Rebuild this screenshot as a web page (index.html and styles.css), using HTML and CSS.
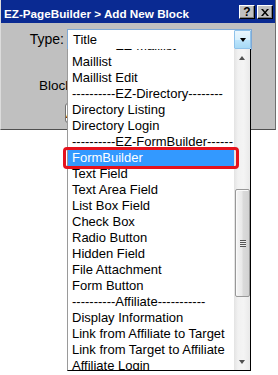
FILE: index.html
```html
<!DOCTYPE html>
<html>
<head>
<title>EZ-PageBuilder - Add New Block</title>
<link rel="stylesheet" href="styles.css">
</head>
<body>

<div class="window">
    <div class="titlebar">
        <span class="title">EZ-PageBuilder &gt; Add New Block</span>
        <div class="tb-buttons">
            <span class="tb-btn help">?</span>
            <span class="tb-btn close">
                <svg width="8" height="7" viewBox="0 0 8 7"><path d="M0 0h2l2 2.5L6 0h2L5 3.5 8 7H6L4 4.5 2 7H0l3-3.5z" fill="#000"/></svg>
            </span>
        </div>
    </div>

    <div class="form">
        <div class="row">
            <label class="lbl">Type:</label>
            <div class="select">
                <span class="sel-text">Title</span>
                <span class="sel-btn"><span class="arrow-down"></span></span>
            </div>
        </div>
        <div class="row row-name">
            <label class="lbl-name">Block Name:</label>
        </div>
        <div class="row row-btn">
            <span class="btn">Add Block</span>
        </div>
    </div>
</div>

<div class="dropdown">
    <ul class="options">
        <li class="first">----------EZ-Maillist----------</li>
        <li>Maillist</li>
        <li>Maillist Edit</li>
        <li>----------EZ-Directory--------</li>
        <li>Directory Listing</li>
        <li>Directory Login</li>
        <li>----------EZ-FormBuilder------</li>
        <li class="selected">FormBuilder</li>
        <li>Text Field</li>
        <li>Text Area Field</li>
        <li>List Box Field</li>
        <li>Check Box</li>
        <li>Radio Button</li>
        <li>Hidden Field</li>
        <li>File Attachment</li>
        <li>Form Button</li>
        <li>----------Affiliate-----------</li>
        <li>Display Information</li>
        <li>Link from Affiliate to Target</li>
        <li>Link from Target to Affiliate</li>
        <li>Affiliate Login</li>
    </ul>
    <div class="scrollbar">
        <div class="sb-btn"><span class="sb-arrow up"></span></div>
        <div class="sb-track">
            <div class="sb-thumb"><span class="grip"></span></div>
        </div>
        <div class="sb-btn"><span class="sb-arrow down"></span></div>
    </div>
</div>

<!-- highlight box round the chosen option -->
<div class="callout"></div>

</body>
</html>
```

FILE: styles.css
```css
body {
    margin: 0;
    background: #fff;
    font-family: "Liberation Sans", Arial, sans-serif;
    color: #000;
}

.window {
    position: relative;
    box-sizing: border-box;
    width: 276px;
    height: 130px;
    background: #c0c0c0;
    border-left: 1px solid #dcdcdc;
    border-right: 1px solid #707070;
    border-bottom: 1px solid #505050;
}

.titlebar {
    display: flex;
    align-items: flex-start;
    justify-content: space-between;
    height: 23px;
    background: #0a2a92;
}

.title {
    padding: 7px 0 0 3px;
    font-size: 11.7px;
    font-weight: bold;
    line-height: 14px;
    color: #fff;
    white-space: nowrap;
}

.tb-buttons {
    display: flex;
    gap: 2px;
    margin: 5px 2px 0 0;
}

.tb-btn {
    box-sizing: border-box;
    display: flex;
    align-items: center;
    justify-content: center;
    width: 16px;
    height: 14px;
    background: #c0c0c0;
    border-top: 1px solid #fff;
    border-left: 1px solid #fff;
    border-right: 1px solid #000;
    border-bottom: 1px solid #000;
    box-shadow: inset -1px -1px 0 #808080;
    font-size: 12px;
    font-weight: bold;
    line-height: 12px;
}

.form {
    padding-top: 6px;
}

.row {
    display: flex;
    align-items: center;
}

.lbl {
    width: 63px;
    padding-right: 3px;
    text-align: right;
    font-size: 14px;
    line-height: 21px;
}

.select {
    box-sizing: border-box;
    display: flex;
    justify-content: space-between;
    width: 185px;
    height: 21px;
    background: #fff;
    border: 1px solid #7ea9d6;
}

.sel-text {
    padding-left: 5px;
    font-size: 13px;
    line-height: 19px;
}

.sel-btn {
    box-sizing: border-box;
    display: flex;
    align-items: center;
    justify-content: center;
    width: 17px;
    height: 19px;
    border: 1px solid #8fc2ea;
    border-radius: 1px;
    background: linear-gradient(#eaf6fd, #d9f0fc 50%, #bee6fd 51%, #a7d9f5);
}

.arrow-down {
    width: 0;
    height: 0;
    border-left: 3.5px solid transparent;
    border-right: 3.5px solid transparent;
    border-top: 4px solid #000;
}

.row-name {
    margin-top: 25px;
}

.lbl-name {
    padding-left: 38px;
    font-size: 13.5px;
    line-height: 21px;
    white-space: nowrap;
}

.row-btn {
    margin-top: 7px;
    padding-left: 64px;
}

.btn {
    box-sizing: border-box;
    width: 110px;
    height: 20px;
    border: 1px solid #707070;
    border-radius: 3px;
    background: linear-gradient(#f2f2f2, #ebebeb 50%, #dddddd 51%, #cfcfcf);
    box-shadow: inset 1px 1px 0 #fff;
}

.dropdown {
    position: absolute;
    top: 49px;
    left: 67px;
    box-sizing: border-box;
    display: flex;
    width: 184px;
    height: 322px;
    background: #fff;
    border-left: 1px solid #9a9a9a;
    border-right: 1px solid #000;
    border-bottom: 1px solid #000;
}

.options {
    flex: 1;
    margin: 0;
    padding: 0;
    list-style: none;
    overflow: hidden;
    font-size: 13px;
    line-height: 16px;
}

.options li {
    padding-left: 4px;
    white-space: nowrap;
}

.options .first {
    margin-top: -11px;
}

.options .selected {
    background: #3399ff;
    color: #fff;
}

.scrollbar {
    display: flex;
    flex-direction: column;
    width: 16px;
    background: linear-gradient(to right, #e3e3e3, #f1f1f1 25%, #f4f4f4 60%, #e9e9e9);
}

.sb-btn {
    display: flex;
    align-items: center;
    justify-content: center;
    height: 17px;
}

.sb-arrow {
    width: 0;
    height: 0;
    border-left: 3.5px solid transparent;
    border-right: 3.5px solid transparent;
}

.sb-arrow.up {
    margin-top: 1px;
    border-bottom: 4px solid #505050;
}

.sb-arrow.down {
    margin-top: 1px;
    border-top: 4px solid #505050;
}

.sb-track {
    flex: 1;
}

.sb-thumb {
    box-sizing: border-box;
    display: flex;
    align-items: center;
    justify-content: center;
    width: 15px;
    height: 108px;
    margin: 123px 0 0 1px;
    border: 1px solid #989898;
    border-radius: 2px;
    background: linear-gradient(to right, #f5f5f5, #e9e9e9 45%, #dadada 55%, #d2d2d2);
    box-shadow: inset 1px 1px 0 #fafafa;
}

.grip {
    width: 6px;
    height: 7px;
    background: repeating-linear-gradient(#555 0, #555 1px, #eee 1px, #eee 2px);
}

.callout {
    position: absolute;
    top: 147px;
    left: 63px;
    box-sizing: border-box;
    width: 176px;
    height: 22px;
    border: 3px solid #e5121c;
    border-radius: 4px;
}
```
